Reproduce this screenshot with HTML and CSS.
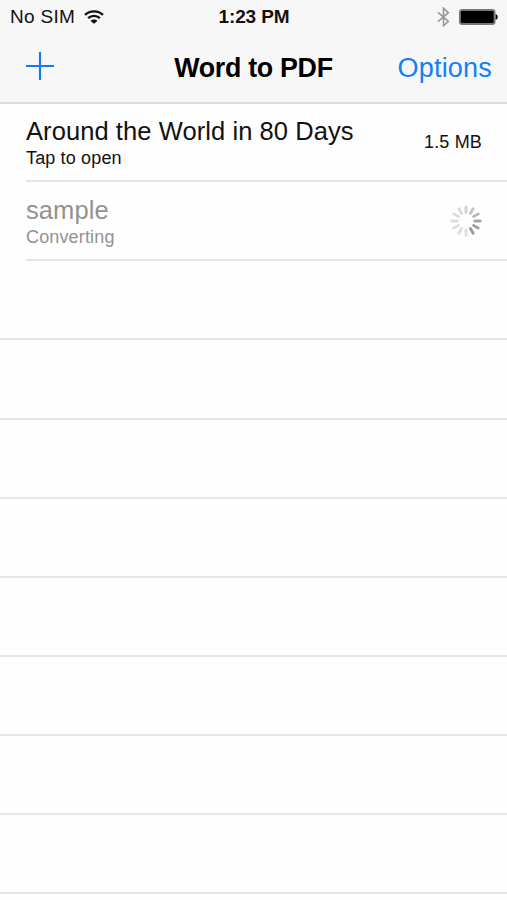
FILE: index.html
```html
<!DOCTYPE html>
<html lang="en">
<head>
<meta charset="utf-8">
<title>Word to PDF</title>
<link rel="stylesheet" href="styles.css">
</head>
<body>
<header class="top">
  <div class="status">
    <div class="carrier"><span>No SIM</span>
      <svg class="wifi" width="20" height="14" viewBox="0 0 20 14"><g fill="none" stroke="#111" stroke-width="2.3"><path d="M1 4.8C6 .1 14 .1 19 4.8"/><path d="M4.1 8.2c3.4-3.2 8.4-3.2 11.8 0"/></g><path d="M6.6 10.9c1.9-1.8 4.9-1.8 6.8 0L10 13.8z" fill="#111"/></svg>
    </div>
    <div class="clock">1:23 PM</div>
    <div class="indicators">
      <svg width="13" height="20" viewBox="0 0 13 20"><path d="M1 5.3 11.3 14.3 6.5 18.8V1.2L11.3 5.7 1 14.7" fill="none" stroke="#999" stroke-width="1.6"/></svg>
      <svg width="39" height="16" viewBox="0 0 39 16"><rect x=".75" y=".75" width="35" height="14.5" rx="2.5" fill="#777" stroke="#777" stroke-width="1.5"/><rect x="1.9" y="1.9" width="32.7" height="12.2" rx="1.4"/><path d="M36.6 5.2c2.8.5 2.8 5.1 0 5.6z"/></svg>
    </div>
  </div>
  <nav class="nav">
    <svg class="add" width="28" height="28" viewBox="0 0 28 28"><path d="M14 0v28M0 14h28" stroke="#1079f5" stroke-width="2.1"/></svg>
    <h1>Word to PDF</h1>
    <a class="options">Options</a>
  </nav>
</header>
<main class="list">
  <div class="row file">
    <div><div class="name">Around the World in 80 Days</div><div class="note">Tap to open</div></div>
    <div class="size">1.5 MB</div>
  </div>
  <div class="row file pending">
    <div><div class="name">sample</div><div class="note">Converting</div></div>
    <svg class="spinner" width="32" height="32" viewBox="-16 -16 32 32"><g stroke-width="2.8" stroke-linecap="round">
      <path d="M0-8.7V-14.2" stroke="#d0d0d0"/>
      <path d="M0-8.7V-14.2" stroke="#c5c5c5" transform="rotate(30)"/>
      <path d="M0-8.7V-14.2" stroke="#b5b5b5" transform="rotate(60)"/>
      <path d="M0-8.7V-14.2" stroke="#a3a3a3" transform="rotate(90)"/>
      <path d="M0-8.7V-14.2" stroke="#999" transform="rotate(120)"/>
      <path d="M0-8.7V-14.2" stroke="#999" transform="rotate(150)"/>
      <path d="M0-8.7V-14.2" stroke="#dedede" transform="rotate(180)"/>
      <path d="M0-8.7V-14.2" stroke="#dedede" transform="rotate(210)"/>
      <path d="M0-8.7V-14.2" stroke="#dedede" transform="rotate(240)"/>
      <path d="M0-8.7V-14.2" stroke="#dedede" transform="rotate(270)"/>
      <path d="M0-8.7V-14.2" stroke="#dcdcdc" transform="rotate(300)"/>
      <path d="M0-8.7V-14.2" stroke="#d8d8d8" transform="rotate(330)"/>
    </g></svg>
  </div>
  <div class="row"></div>
  <div class="row"></div>
  <div class="row"></div>
  <div class="row"></div>
  <div class="row"></div>
  <div class="row"></div>
  <div class="row"></div>
  <div class="row"></div>
</main>
</body>
</html>
```

FILE: styles.css
```css
* { box-sizing: border-box; }
body {
  margin: 0;
  height: 900px;
  overflow: hidden;
  background: #fefefe;
  color: #111;
  font-family: "Liberation Sans", Arial, sans-serif;
}
svg { display: block; flex: none; }
.top {
  height: 104px;
  background: #f7f7f7;
  border-bottom: 2px solid #dcdcdc;
}
.status {
  display: grid;
  grid-template-columns: 1fr auto 1fr;
  align-items: center;
  height: 34px;
  padding: 0 9px 0 10px;
  font-size: 19px;
  line-height: 34px;
}
.carrier { display: flex; align-items: center; gap: 9px; letter-spacing: .3px; }
.wifi { margin-top: -1px; }
.clock { font-weight: bold; letter-spacing: -.1px; }
.indicators { display: flex; align-items: center; justify-content: flex-end; gap: 9px; }
.nav {
  display: grid;
  grid-template-columns: 1fr auto 1fr;
  align-items: center;
  height: 67px;
  padding: 0 15px;
}
.add { margin: -4px 0 0 11px; }
h1 {
  margin: 0;
  font-size: 26.8px;
  line-height: 32px;
  letter-spacing: -.3px;
  color: #000;
}
.options {
  justify-self: end;
  font-size: 27px;
  line-height: 32px;
  letter-spacing: .2px;
  color: #1480f5;
}
.list { margin-top: -1px; }
.row {
  height: 79.15px;
  border-bottom: 2px solid #e5e5e5;
}
.file {
  display: flex;
  justify-content: space-between;
  margin-left: 26px;
  padding: 13px 25px 0 0;
}
.name { font-size: 25.5px; line-height: 30px; letter-spacing: .08px; }
.note { margin-top: 1px; font-size: 18px; line-height: 22px; letter-spacing: .15px; }
.size { padding-top: 15px; font-size: 18px; line-height: 22px; letter-spacing: .15px; }
.pending { color: #929292; }
.spinner { margin-top: 10px; }
```
